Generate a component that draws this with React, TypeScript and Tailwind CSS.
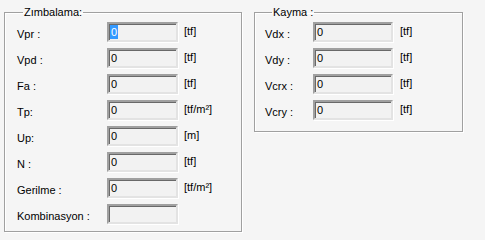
import React from 'react'

const font = { fontFamily: '"Liberation Sans", Arial, sans-serif' }

interface Row {
  label: string
  value: string | null
  unit?: string
  selected?: boolean
}

const zimbalama: Row[] = [
  { label: 'Vpr :', value: '0', unit: '[tf]', selected: true },
  { label: 'Vpd :', value: '0', unit: '[tf]' },
  { label: 'Fa :', value: '0', unit: '[tf]' },
  { label: 'Tp:', value: '0', unit: '[tf/m²]' },
  { label: 'Up:', value: '0', unit: '[m]' },
  { label: 'N :', value: '0', unit: '[tf]' },
  { label: 'Gerilme :', value: '0', unit: '[tf/m²]' },
  { label: 'Kombinasyon :', value: null },
]

const kayma: Row[] = [
  { label: 'Vdx :', value: '0', unit: '[tf]' },
  { label: 'Vdy :', value: '0', unit: '[tf]' },
  { label: 'Vcrx :', value: '0', unit: '[tf]' },
  { label: 'Vcry :', value: '0', unit: '[tf]' },
]

function Box({ value, selected, width }: { value: string | null; selected?: boolean; width: string }) {
  return (
    <div
      className={`${width} h-[20px] shrink-0 border-2 border-t-[#a0a0a0] border-l-[#a0a0a0] border-b-[#e3e3e3] border-r-[#e3e3e3] bg-[#f2f2f2] shadow-[inset_1px_1px_0_#696969,1px_1px_0_#fff] pl-[1px] pt-[1px] text-[11px] leading-[14px] text-black`}
    >
      {value !== null &&
        (selected ? (
          <span className="inline-block bg-[#3399ff] px-[1px] text-white">{value}</span>
        ) : (
          <span className="inline-block pl-[1px]">{value}</span>
        ))}
    </div>
  )
}

function Group({
  title,
  rows,
  className,
  labelWidth,
  boxWidth,
  unitGap,
  legendGap,
}: {
  title: string
  rows: Row[]
  className: string
  labelWidth: string
  boxWidth: string
  unitGap: string
  legendGap: string
}) {
  return (
    <fieldset
      className={`${className} shrink-0 border border-[#a0a0a0] shadow-[1px_1px_0_#fff,inset_1px_1px_0_#fff] pt-[3px]`}
    >
      <legend className={`${legendGap} px-[1px] text-[11px] leading-[13px] text-black`}>{title}</legend>
      <div className="flex flex-col gap-[6px]">
        {rows.map((r) => (
          <div key={r.label} className="flex items-start">
            <div className={`${labelWidth} shrink-0 pt-[6px] text-[11px] leading-[13px] text-black`}>{r.label}</div>
            <Box value={r.value} selected={r.selected} width={boxWidth} />
            {r.unit && (
              <div className={`${unitGap} pt-[3px] text-[11px] leading-[13px] text-black`}>{r.unit}</div>
            )}
          </div>
        ))}
      </div>
    </fieldset>
  )
}

export default function App() {
  return (
    <div style={font} className="flex h-[240px] w-[485px] items-start bg-[#f5f5f5] pl-[4px] pt-[6px]">
      <Group
        title="Zımbalama:"
        rows={zimbalama}
        className="h-[226px] w-[238px] pl-[12px]"
        labelWidth="w-[90px]"
        boxWidth="w-[71px]"
        unitGap="ml-[6px]"
        legendGap="ml-[6px]"
      />
      <Group
        title="Kayma :"
        rows={kayma}
        className="ml-[12px] h-[126px] w-[209px] pl-[10px]"
        labelWidth="w-[48px]"
        boxWidth="w-[80px]"
        unitGap="ml-[7px]"
        legendGap="ml-[7px]"
      />
    </div>
  )
}
